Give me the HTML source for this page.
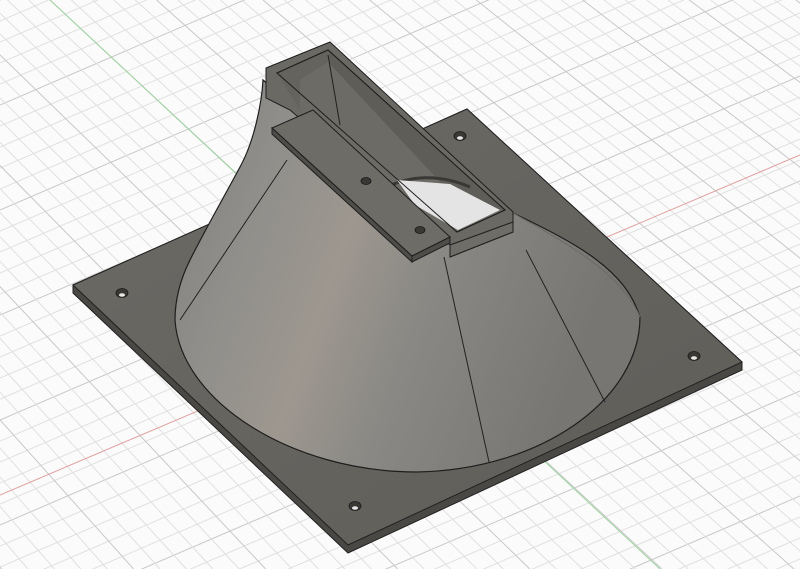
<!DOCTYPE html>
<html><head><meta charset="utf-8"><style>
html,body{margin:0;padding:0;background:#fbfbfb;width:800px;height:569px;overflow:hidden}
svg{display:block;overflow:hidden}
</style></head><body>
<svg id="s" width="800" height="569" viewBox="0 0 800 569" xmlns="http://www.w3.org/2000/svg">
<defs>
<linearGradient id="cone" x1="0" y1="0" x2="1" y2="0.3">
<stop offset="0" stop-color="#7f7e7a"/>
<stop offset="0.25" stop-color="#908f8b"/>
<stop offset="0.45" stop-color="#9d978f"/>
<stop offset="0.65" stop-color="#898884"/>
<stop offset="1" stop-color="#787672"/>
</linearGradient>
<linearGradient id="plate" x1="0" y1="0" x2="1" y2="1">
<stop offset="0" stop-color="#6c6a65"/>
<stop offset="1" stop-color="#5f5d58"/>
</linearGradient>
</defs>
<g id="grid"></g>
<line x1="0" y1="495" x2="800" y2="155" stroke="#e0a0a0" stroke-width="1"/>
<line x1="50" y1="0" x2="660" y2="569" stroke="#9ed49e" stroke-width="1"/>
<polygon points="73,285 467,109 742,362 742,370 348,553 73,293" fill="#4a4844" stroke="#222" stroke-width="1"/>
<polygon points="73,285 467,109 742,362 348,545" fill="url(#plate)" stroke="#222" stroke-width="1"/>
<g fill="#3a3834" stroke="#1a1a1a" stroke-width="0.8">
<ellipse cx="122" cy="293" rx="6" ry="4.5"/>
<ellipse cx="460" cy="136" rx="6" ry="4.5"/>
<ellipse cx="694" cy="356" rx="6" ry="4.5"/>
<ellipse cx="355" cy="506" rx="6" ry="4.5"/>
</g>
<g fill="#e8e8e8"><ellipse cx="122" cy="295" rx="3" ry="1.8"/><ellipse cx="460" cy="138" rx="3" ry="1.8"/><ellipse cx="694" cy="358" rx="3" ry="1.8"/><ellipse cx="355" cy="508" rx="3" ry="1.8"/></g>
<path d="M263,80 C262,100 255,140 240,167 C225,195 205,230 190,260 C180,280 175,300 175,320 C180,400 290,472 417,472 C540,470 640,400 640,317 C625,270 580,245 513,213 L450,240 L300,110 Z" fill="url(#cone)" stroke="#1e1e1e" stroke-width="1.2"/>
<path d="M513,213 C560,240 620,270 640,317" fill="none" stroke="#6c6a66" stroke-width="1"/>
<line x1="287" y1="160" x2="180" y2="320" stroke="#222" stroke-width="1"/>
<line x1="444" y1="257" x2="489" y2="462" stroke="#222" stroke-width="1"/>
<line x1="526" y1="250" x2="605" y2="402" stroke="#222" stroke-width="1"/>
<!-- duct -->
<polygon points="266,68 330,42 513,212 513,232 450,257 450,245 290,110 266,98" fill="#6b6964" stroke="#1e1e1e" stroke-width="1"/>
<polygon points="277,73 328,50 505,210 457,232" fill="#74726d" stroke="#1e1e1e" stroke-width="1"/>
<polygon points="277,73 328,50 328,62 300,80 300,110" fill="#65635e"/>
<polygon points="328,50 505,210 470,214 330,70" fill="#5f5d58"/>
<polygon points="300,80 328,62 470,214 440,224 300,110" fill="#6d6b66"/>
<line x1="328" y1="55" x2="340" y2="125" stroke="#222" stroke-width="1"/>
<path d="M385,188 C410,175 440,174 470,187" fill="none" stroke="#3a3834" stroke-width="3"/>
<polygon points="397,180 450,184 500,210 458,230 415,205" fill="#e4e4e4"/>
<polygon points="277,73 328,50 505,210 457,232" fill="none" stroke="#1e1e1e" stroke-width="1"/>
<polygon points="450,245 513,222 513,232 450,257" fill="#6f6d68" stroke="#1e1e1e" stroke-width="1"/>
<!-- bar -->
<polygon points="272,128 313,110 450,237 412,256" fill="#6e6c67" stroke="#1e1e1e" stroke-width="1"/>
<polygon points="272,128 412,256 412,262 272,134" fill="#4f4d49" stroke="#1e1e1e" stroke-width="1"/>
<polygon points="412,256 450,237 450,243 412,262" fill="#4f4d49" stroke="#1e1e1e" stroke-width="1"/>
<g fill="#3a3834" stroke="#1a1a1a" stroke-width="0.8"><ellipse cx="366" cy="181" rx="5" ry="3.5"/><ellipse cx="420" cy="230" rx="5" ry="3.5"/></g>
</svg>
<script>
var g=document.getElementById('grid'),h='';
for(var i=-20;i<60;i++){var y0=i*21;var c=(i%5==0)?'#c8c8c8':'#e0e0e0';h+='<line x1="0" y1="'+y0+'" x2="800" y2="'+(y0-344)+'" stroke="'+c+'" stroke-width="1"/>';}
var vx=-2505,vy=-2376;
for(var j=-40;j<40;j++){var x300=50+300/0.93+j*24;var dx=x300-vx,dy=300-vy;var x2=vx+dx*(569-vy)/dy;var x1=vx+dx*(0-vy)/dy;var c=(j%5==0)?'#c8c8c8':'#e0e0e0';h+='<line x1="'+x1+'" y1="0" x2="'+x2+'" y2="569" stroke="'+c+'" stroke-width="1"/>';}
g.innerHTML=h;
</script>
</body></html>
